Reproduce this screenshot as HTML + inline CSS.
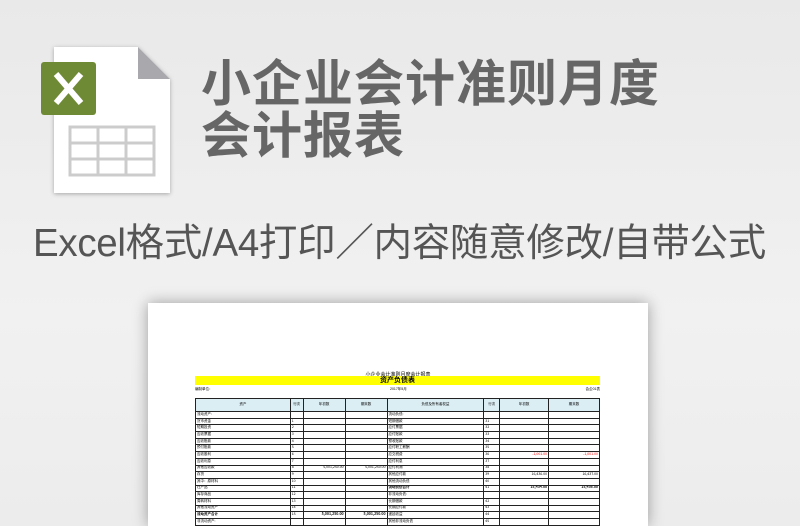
<!DOCTYPE html>
<html style="overflow:hidden;width:800px;height:526px"><head><meta charset="utf-8"><style>
*{margin:0;padding:0;box-sizing:border-box}
body{width:800px;height:526px;overflow:hidden;background:linear-gradient(#e9e9e9,#f1f1f1 60%,#ececec);position:relative;font-family:"Liberation Sans","Noto Sans CJK SC",sans-serif}
.t{position:absolute;color:#666;font-weight:bold;font-size:50px;line-height:52px;left:201px;letter-spacing:1px}
.sub{position:absolute;left:33px;top:212px;font-size:38.5px;color:#555;white-space:nowrap;letter-spacing:-0.3px}
.paper{position:absolute;left:148px;top:303px;width:500px;height:223px;background:#fff;box-shadow:0 0 14px rgba(0,0,0,.35);overflow:hidden}
table{position:absolute;left:47px;top:95px;border-collapse:collapse;width:405px;font-size:3.5px;font-family:"Noto Sans CJK SC",sans-serif}
td{border:1px solid #222;height:6.7px;line-height:4px;padding:0 1px;white-space:nowrap;overflow:hidden}
tr.h td{background:#dbeef4;height:13px;text-align:center}
</style></head><body>
<svg style="position:absolute;left:0;top:0" width="200" height="200">
<defs><filter id="s"><feDropShadow dx="0" dy="1" stdDeviation="2" flood-opacity=".3"/></filter></defs>
<path d="M54 47 H138 L170 79 V193 H54 Z" fill="#fff" filter="url(#s)"/>
<path d="M138 47 V79 H170 Z" fill="#a9a9ad"/>
<rect x="41" y="62" width="55" height="53" rx="3" fill="#6f8a35"/>
<path d="M56 74 L81 103 M81 74 L56 103" stroke="#fff" stroke-width="6"/>
<g fill="none" stroke="#ccc" stroke-width="3">
<rect x="70" y="127" width="84" height="48"/>
<path d="M70 143 H154 M70 159 H154 M98 127 V175 M126 127 V175"/>
</g>
</svg>
<div class="t" style="top:58px">小企业会计准则月度</div>
<div class="t" style="top:110px">会计报表</div>
<div class="sub">Excel格式/A4打印／内容随意修改/自带公式</div>
<div class="paper">
<div style="position:absolute;left:0;width:100%;top:68px;text-align:center;font-size:5px">小企业会计准则月度会计报表</div>
<div style="position:absolute;left:47px;width:405px;top:73px;height:9px;background:#ffff00;text-align:center;font-size:7px;font-weight:bold;line-height:9px">资产负债表</div>
<div style="position:absolute;left:47px;width:405px;top:84px;font-size:3.5px">编制单位：<span style="position:absolute;left:195px">2017年5月</span><span style="position:absolute;right:0">会企01表</span></div>
<table>
<colgroup><col style="width:95px"><col style="width:13px"><col style="width:42px"><col style="width:42px"><col style="width:97px"><col style="width:16px"><col style="width:49px"><col style="width:51px"></colgroup>
<tr class="h"><td>资产</td><td>行次</td><td>年初数</td><td>期末数</td><td>负债及所有者权益</td><td>行次</td><td>年初数</td><td>期末数</td></tr>
<tr><td>流动资产:</td><td></td><td></td><td></td><td>流动负债:</td><td></td><td></td><td></td></tr>
<tr><td>货币资金</td><td>1</td><td></td><td></td><td>短期借款</td><td>31</td><td></td><td></td></tr>
<tr><td>短期投资</td><td>2</td><td></td><td></td><td>应付票据</td><td>32</td><td></td><td></td></tr>
<tr><td>应收票据</td><td>3</td><td></td><td></td><td>应付账款</td><td>33</td><td></td><td></td></tr>
<tr><td>应收账款</td><td>4</td><td></td><td></td><td>预收账款</td><td>34</td><td></td><td></td></tr>
<tr><td>预付账款</td><td>5</td><td></td><td></td><td>应付职工薪酬</td><td>35</td><td></td><td></td></tr>
<tr><td>应收股利</td><td>6</td><td></td><td></td><td>应交税费</td><td>36</td><td style="color:red;text-align:right">-1,001.00</td><td style="color:red;text-align:right">-1,001.00</td></tr>
<tr><td>应收利息</td><td>7</td><td></td><td></td><td>应付利息</td><td>37</td><td></td><td></td></tr>
<tr><td>其他应收款</td><td>8</td><td style="text-align:right">5,001,250.00</td><td style="text-align:right">5,001,250.00</td><td>应付利润</td><td>38</td><td></td><td></td></tr>
<tr><td>存货</td><td>9</td><td></td><td></td><td>其他应付款</td><td>39</td><td style="text-align:right">16,436.00</td><td style="text-align:right">16,437.00</td></tr>
<tr><td>其中：原材料</td><td>10</td><td></td><td></td><td>其他流动负债</td><td>40</td><td></td><td></td></tr>
<tr><td>在产品</td><td>11</td><td></td><td></td><td><b>流动负债合计</b></td><td>41</td><td style="text-align:right"><b>15,434.00</b></td><td style="text-align:right"><b>15,436.00</b></td></tr>
<tr><td>库存商品</td><td>12</td><td></td><td></td><td>非流动负债:</td><td></td><td></td><td></td></tr>
<tr><td>周转材料</td><td>13</td><td></td><td></td><td>长期借款</td><td>42</td><td></td><td></td></tr>
<tr><td>其他流动资产</td><td>14</td><td></td><td></td><td>长期应付款</td><td>43</td><td></td><td></td></tr>
<tr><td><b>流动资产合计</b></td><td>15</td><td style="text-align:right"><b>5,001,250.00</b></td><td style="text-align:right"><b>5,001,250.00</b></td><td>递延收益</td><td>44</td><td></td><td></td></tr>
<tr><td>非流动资产:</td><td></td><td></td><td></td><td>其他非流动负债</td><td>45</td><td></td><td></td></tr>
</table>
</div>
</body></html>
